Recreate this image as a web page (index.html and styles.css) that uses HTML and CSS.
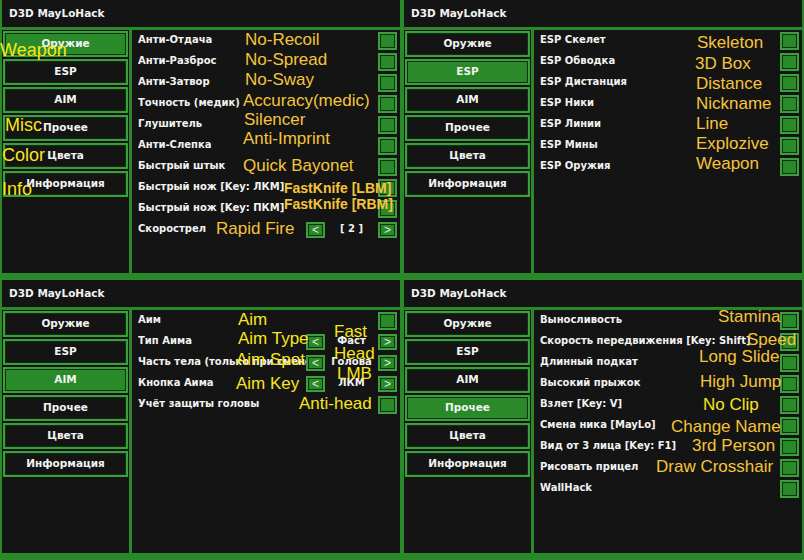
FILE: index.html
```html
<!DOCTYPE html>
<html lang="ru">
  <head>
    <meta charset="UTF-8" />
    <title>D3D MayLoHack</title>
    <link rel="stylesheet" href="styles.css">
  </head>
  <body>
    <div class="screen">
      <!-- Оружие -->
      <section class="panel">
        <div class="panel-head">D3D MayLoHack</div>
        <div class="panel-body">
          <nav class="side">
            <div class="tab active">Оружие</div>
            <div class="tab">ESP</div>
            <div class="tab">AIM</div>
            <div class="tab">Прочее</div>
            <div class="tab">Цвета</div>
            <div class="tab">Информация</div>
          </nav>
          <div class="opts">
            <div class="row"><span class="label">Анти-Отдача</span><span class="check"></span></div>
            <div class="row"><span class="label">Анти-Разброс</span><span class="check"></span></div>
            <div class="row"><span class="label">Анти-Затвор</span><span class="check"></span></div>
            <div class="row"><span class="label">Точность (медик)</span><span class="check"></span></div>
            <div class="row"><span class="label">Глушитель</span><span class="check"></span></div>
            <div class="row"><span class="label">Анти-Слепка</span><span class="check"></span></div>
            <div class="row"><span class="label">Быстрый штык</span><span class="check"></span></div>
            <div class="row"><span class="label">Быстрый нож [Key: ЛКМ]</span><span class="check"></span></div>
            <div class="row"><span class="label">Быстрый нож [Key: ПКМ]</span><span class="check"></span></div>
            <div class="row">
              <span class="label">Скорострел</span>
              <span class="arrow">&lt;</span><span class="value">[ 2 ]</span><span class="arrow">&gt;</span>
            </div>
          </div>
        </div>
        <span class="note gold n-recoil">No-Recoil</span>
        <span class="note gold n-spread">No-Spread</span>
        <span class="note gold n-sway">No-Sway</span>
        <span class="note gold n-accuracy">Accuracy(medic)</span>
        <span class="note gold n-silencer">Silencer</span>
        <span class="note gold n-imprint">Anti-Imprint</span>
        <span class="note gold n-bayonet">Quick Bayonet</span>
        <span class="note gold small n-lbm">FastKnife [LBM]</span>
        <span class="note gold small n-rbm">FastKnife [RBM]</span>
        <span class="note gold n-rapid">Rapid Fire</span>
        <span class="note lemon big n-weapon">Weapon</span>
        <span class="note lemon big n-misc">Misc</span>
        <span class="note lemon big n-color">Color</span>
        <span class="note lemon big n-info">Info</span>
      </section>

      <!-- ESP -->
      <section class="panel">
        <div class="panel-head">D3D MayLoHack</div>
        <div class="panel-body">
          <nav class="side">
            <div class="tab">Оружие</div>
            <div class="tab active">ESP</div>
            <div class="tab">AIM</div>
            <div class="tab">Прочее</div>
            <div class="tab">Цвета</div>
            <div class="tab">Информация</div>
          </nav>
          <div class="opts">
            <div class="row"><span class="label">ESP Скелет</span><span class="check"></span></div>
            <div class="row"><span class="label">ESP Обводка</span><span class="check"></span></div>
            <div class="row"><span class="label">ESP Дистанция</span><span class="check"></span></div>
            <div class="row"><span class="label">ESP Ники</span><span class="check"></span></div>
            <div class="row"><span class="label">ESP Линии</span><span class="check"></span></div>
            <div class="row"><span class="label">ESP Мины</span><span class="check"></span></div>
            <div class="row"><span class="label">ESP Оружия</span><span class="check"></span></div>
          </div>
        </div>
        <span class="note gold n-skeleton">Skeleton</span>
        <span class="note gold n-box">3D Box</span>
        <span class="note gold n-distance">Distance</span>
        <span class="note gold n-nick">Nickname</span>
        <span class="note gold n-line">Line</span>
        <span class="note gold n-explo">Explozive</span>
        <span class="note gold n-espweapon">Weapon</span>
      </section>

      <!-- AIM -->
      <section class="panel">
        <div class="panel-head">D3D MayLoHack</div>
        <div class="panel-body">
          <nav class="side">
            <div class="tab">Оружие</div>
            <div class="tab">ESP</div>
            <div class="tab active">AIM</div>
            <div class="tab">Прочее</div>
            <div class="tab">Цвета</div>
            <div class="tab">Информация</div>
          </nav>
          <div class="opts">
            <div class="row"><span class="label">Аим</span><span class="check"></span></div>
            <div class="row">
              <span class="label">Тип Аима</span>
              <span class="arrow">&lt;</span><span class="value">Фаст</span><span class="arrow">&gt;</span>
            </div>
            <div class="row">
              <span class="label">Часть тела (только при смене)</span>
              <span class="arrow">&lt;</span><span class="value">Голова</span><span class="arrow">&gt;</span>
            </div>
            <div class="row">
              <span class="label">Кнопка Аима</span>
              <span class="arrow">&lt;</span><span class="value">ЛКМ</span><span class="arrow">&gt;</span>
            </div>
            <div class="row"><span class="label">Учёт защиты головы</span><span class="check"></span></div>
          </div>
        </div>
        <span class="note lemon n-aim">Aim</span>
        <span class="note lemon n-aimtype">Aim Type</span>
        <span class="note lemon n-aimspot">Aim Spot</span>
        <span class="note lemon n-aimkey">Aim Key</span>
        <span class="note lemon n-antihead">Anti-head</span>
        <span class="note lemon n-fast">Fast</span>
        <span class="note lemon n-head">Head</span>
        <span class="note lemon n-lmb">LMB</span>
      </section>

      <!-- Прочее -->
      <section class="panel">
        <div class="panel-head">D3D MayLoHack</div>
        <div class="panel-body">
          <nav class="side">
            <div class="tab">Оружие</div>
            <div class="tab">ESP</div>
            <div class="tab">AIM</div>
            <div class="tab active">Прочее</div>
            <div class="tab">Цвета</div>
            <div class="tab">Информация</div>
          </nav>
          <div class="opts">
            <div class="row"><span class="label">Выносливость</span><span class="check"></span></div>
            <div class="row"><span class="label">Скорость передвижения [Key: Shift]</span><span class="check"></span></div>
            <div class="row"><span class="label">Длинный подкат</span><span class="check"></span></div>
            <div class="row"><span class="label">Высокий прыжок</span><span class="check"></span></div>
            <div class="row"><span class="label">Взлет [Key: V]</span><span class="check"></span></div>
            <div class="row"><span class="label">Смена ника [MayLo]</span><span class="check"></span></div>
            <div class="row"><span class="label">Вид от 3 лица [Key: F1]</span><span class="check"></span></div>
            <div class="row"><span class="label">Рисовать прицел</span><span class="check"></span></div>
            <div class="row"><span class="label">WallHack</span><span class="check"></span></div>
          </div>
        </div>
        <span class="note gold n-stamina">Stamina</span>
        <span class="note gold n-speed">Speed</span>
        <span class="note gold n-slide">Long Slide</span>
        <span class="note gold n-jump">High Jump</span>
        <span class="note lemon n-noclip">No Clip</span>
        <span class="note gold n-name">Change Name</span>
        <span class="note gold n-person">3rd Person</span>
        <span class="note gold n-cross">Draw Crosshair</span>
      </section>
    </div>
  </body>
</html>
```

FILE: styles.css
```css
/* Base */
* {
  box-sizing: border-box;
  margin: 0;
  padding: 0;
}

body {
  background-color: #2a8a2a;
  font-family: "DejaVu Sans", sans-serif;
  font-size: 10px;
  font-weight: bold;
  color: #f2f2f2;
  overflow: hidden;
}

/* Grille des 4 fenêtres */
.screen {
  display: grid;
  grid-template-columns: 402px 402px;
  grid-template-rows: 280px 280px;
  margin-top: -2px;
}

.panel {
  position: relative;
  display: flex;
  flex-direction: column;
  background-color: #141414;
  border: 2px solid #2a8a2a;
}

.panel-head {
  height: 30px;
  line-height: 27px;
  padding-left: 7px;
  border-bottom: 3px solid #2a8a2a;
  font-size: 10.5px;
}

.panel-body {
  flex: 1;
  display: flex;
  min-height: 0;
  border-bottom: 3px solid #2a8a2a;
}

/* Menu de gauche */
.side {
  flex: 0 0 130px;
  padding: 1px;
  border-right: 3px solid #2a8a2a;
}

.tab {
  height: 26px;
  margin-bottom: 2px;
  display: flex;
  align-items: center;
  justify-content: center;
  padding-bottom: 3px;
  border: 2px solid #3d9e3d;
  box-shadow: inset 0 0 0 1px #0e330e;
  background-color: #141414;
  font-size: 10.5px;
}

.tab.active {
  background-color: #2a8a2a;
}

/* Options */
.opts {
  flex: 1;
  min-width: 0;
  padding: 0 3px 0 6px;
}

.row {
  height: 21px;
  display: flex;
  align-items: center;
}

.label {
  flex: 1;
  min-width: 0;
  white-space: nowrap;
  overflow: hidden;
  padding-bottom: 3px;
}

.check {
  flex-shrink: 0;
  width: 19px;
  height: 18px;
  border: 2px solid #3d9e3d;
  box-shadow: inset 0 0 0 1px #0e330e;
  background-color: #2a8a2a;
}

.arrow {
  flex-shrink: 0;
  width: 19px;
  height: 16px;
  display: flex;
  align-items: center;
  justify-content: center;
  border: 2px solid #3d9e3d;
  box-shadow: inset 0 0 0 1px #0e330e;
  background-color: #2a8a2a;
  font-family: "Liberation Sans", sans-serif;
  font-weight: normal;
  font-size: 12px;
  color: #d8f0d8;
}

.value {
  flex-shrink: 0;
  width: 53px;
  text-align: center;
  padding-bottom: 2px;
}

/* Annotations jaunes */
.note {
  position: absolute;
  font-family: "Liberation Sans", Arial, sans-serif;
  font-weight: normal;
  font-size: 17px;
  line-height: 17px;
  white-space: nowrap;
}

.note.big {
  font-size: 18px;
  line-height: 18px;
}

.note.small {
  font-size: 14px;
  line-height: 14px;
  font-weight: bold;
}

.gold {
  color: #f4c43a;
}

.lemon {
  color: #f9e51c;
}

/* Оружие */
.n-recoil { left: 243px; top: 31px; }
.n-spread { left: 243px; top: 51px; }
.n-sway { left: 243px; top: 71px; }
.n-accuracy { left: 241px; top: 92px; }
.n-silencer { left: 242px; top: 111px; }
.n-imprint { left: 241px; top: 130px; }
.n-bayonet { left: 241px; top: 157px; }
.n-lbm { left: 282px; top: 181px; }
.n-rbm { left: 282px; top: 197px; }
.n-rapid { left: 214px; top: 220px; }
.n-weapon { left: -2px; top: 41px; }
.n-misc { left: 3px; top: 116px; }
.n-color { left: 0; top: 146px; }
.n-info { left: 0; top: 180px; }

/* ESP */
.n-skeleton { left: 293px; top: 34px; }
.n-box { left: 291px; top: 55px; }
.n-distance { left: 292px; top: 75px; }
.n-nick { left: 292px; top: 95px; }
.n-line { left: 292px; top: 115px; }
.n-explo { left: 292px; top: 135px; }
.n-espweapon { left: 292px; top: 155px; }

/* AIM */
.n-aim { left: 236px; top: 31px; }
.n-aimtype { left: 236px; top: 50px; }
.n-aimspot { left: 234px; top: 71px; }
.n-aimkey { left: 234px; top: 95px; }
.n-antihead { left: 297px; top: 115px; }
.n-fast { left: 332px; top: 43px; }
.n-head { left: 332px; top: 65px; }
.n-lmb { left: 335px; top: 85px; }

/* Прочее */
.n-stamina { left: 314px; top: 28px; }
.n-speed { left: 343px; top: 51px; }
.n-slide { left: 295px; top: 68px; }
.n-jump { left: 296px; top: 93px; }
.n-noclip { left: 299px; top: 116px; }
.n-name { left: 267px; top: 138px; }
.n-person { left: 288px; top: 157px; }
.n-cross { left: 252px; top: 178px; }
```
